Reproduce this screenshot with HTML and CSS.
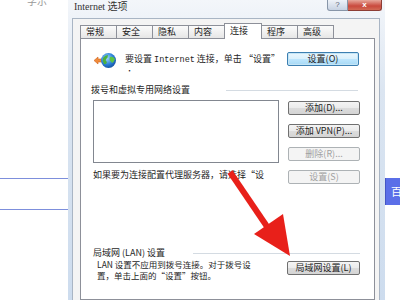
FILE: index.html
```html
<!DOCTYPE html>
<html lang="zh">
<head>
<meta charset="utf-8">
<link rel="stylesheet" href="styles.css">
</head>
<body>
<div class="screen">
  <div class="bg-left">
    <div class="bg-text">字示</div>
    <div class="bg-line l1"></div>
    <div class="bg-line l2"></div>
  </div>
  <div class="dialog">
    <div class="titlebar">
      <span class="title">Internet 选项</span>
      <div class="caption">
        <span class="cap-help">?</span>
        <span class="cap-close">x</span>
      </div>
    </div>
    <div class="client">
      <div class="tabs">
        <span class="tab">常规</span>
        <span class="tab">安全</span>
        <span class="tab">隐私</span>
        <span class="tab">内容</span>
        <span class="tab active">连接</span>
        <span class="tab">程序</span>
        <span class="tab">高级</span>
      </div>
      <div class="page">
        <div class="intro">
          <svg class="globe" width="24" height="17" viewBox="0 0 24 17">
            <defs>
              <radialGradient id="g" cx="0.4" cy="0.35" r="0.7">
                <stop offset="0" stop-color="#9fd6ff"/>
                <stop offset="0.6" stop-color="#2a7fd6"/>
                <stop offset="1" stop-color="#154f9e"/>
              </radialGradient>
            </defs>
            <path d="M1 8.5 L5 5 L5 7 L10 7 L10 10 L5 10 L5 12 Z" fill="#f08a3a" stroke="#d0641c" stroke-width="0.6"/>
            <circle cx="15.5" cy="8.5" r="7.5" fill="url(#g)"/>
            <path d="M10 6 Q12 3 15 3 Q15 6 13 7 Q12 9 14 10 Q13 13 11 12 Q9 9 10 6 Z" fill="#4cb23c"/>
            <path d="M17 5 Q20 4 22 7 Q21 10 19 11 Q18 9 17 9 Q16 7 17 5 Z" fill="#5cc444"/>
          </svg>
          <div class="intro-text">要设置 <span class="latin">Internet</span> 连接，单击 “设置”<br><span class="dot">•</span></div>
          <span class="btn default setup-btn">设置(O)</span>
        </div>
        <div class="group-head">
          <span>拨号和虚拟专用网络设置</span>
          <span class="rule rule1"></span>
        </div>
        <div class="vpn">
          <div class="vpn-left">
            <div class="listbox"></div>
            <div class="proxy-text">如果要为连接配置代理服务器，请选择“设</div>
          </div>
          <div class="vpn-right">
            <span class="btn">添加(D)...</span>
            <span class="btn">添加 VPN(P)...</span>
            <span class="btn disabled">删除(R)...</span>
            <span class="btn disabled">设置(S)</span>
          </div>
        </div>
        <div class="group-head lan-head">
          <span>局域网 (LAN) 设置</span>
          <span class="rule rule2"></span>
        </div>
        <div class="lan">
          <div class="lan-text">LAN 设置不应用到拨号连接。对于拨号设<br>置，单击上面的“设置”按钮。</div>
          <span class="btn lan-btn">局域网设置(L)</span>
        </div>
      </div>
    </div>
  </div>
  <div class="bg-right">
    <div class="blue-btn">百</div>
  </div>
  <svg class="arrow" width="400" height="300" viewBox="0 0 400 300">
    <line x1="230" y1="172" x2="268" y2="228" stroke="#e8201a" stroke-width="6"/>
    <polygon points="254,234 283,214 290,256" fill="#e8201a"/>
  </svg>
</div>
</body>
</html>
```
FILE: styles.css
```css
* { box-sizing: border-box; margin: 0; padding: 0; }
html, body { width: 400px; height: 300px; overflow: hidden; background: #fff; }
body {
  font-family: "Noto Sans CJK SC", "Liberation Sans", sans-serif;
  font-size: 9px;
  color: #1e1e1e;
}
.screen { position: relative; display: flex; height: 300px; }

/* background page */
.bg-left { width: 68px; flex: none; }
.bg-text { margin: -4px 0 0 27px; height: 7px; font-size: 10px; line-height: 10px; color: #999; }
.bg-line { height: 1px; background: #7d8fdc; }
.l1 { margin-top: 175px; }
.l2 { margin-top: 30px; }
.bg-right { flex: 1; }
.blue-btn {
  margin-top: 178px; height: 27px;
  background: #5b6fe8; color: #fff;
  font-size: 11px; line-height: 27px; padding-left: 5px;
  border-left: 1px solid #4556c4;
}

/* dialog */
.dialog {
  width: 317px; flex: none;
  display: flex; flex-direction: column;
  background: linear-gradient(#f3f6fa, #dbe5f1 30%, #cddcee);
  padding: 0 5px 0 4px;
}
.titlebar { height: 18px; display: flex; }
.title { margin: 2px 0 0 2px; font-family: "Liberation Serif", "Noto Sans CJK SC", serif; font-size: 10px; line-height: 10px; color: #333; }
.caption { margin-left: auto; margin-right: -2px; display: flex; height: 11px; }
.cap-help {
  width: 21px; height: 11px;
  border: 1px solid #8795a8; border-top: none; border-radius: 0 0 0 3px;
  background: linear-gradient(#eef2f8, #c7d2e2);
  color: #5a6576; font-family: "Liberation Sans", sans-serif; font-size: 8px; line-height: 9px; text-align: center;
}
.cap-close {
  width: 34px; height: 11px;
  border: 1px solid #8c3d35; border-left: none; border-top: none; border-radius: 0 0 3px 0;
  background: linear-gradient(#e7a89c, #c9493d 60%, #d26a55);
  color: #fff; font-family: "Liberation Sans", sans-serif; font-weight: bold; font-size: 8px; line-height: 9px; text-align: center;
}
.client {
  flex: 1;
  display: flex; flex-direction: column;
  background: #f4f4f4;
  border: 1px solid #a9b5c4; border-bottom: none;
  padding: 6px 4px 0 7px;
}
.tabs { display: flex; align-items: flex-end; height: 13px; position: relative; z-index: 1; }
.tab {
  width: 37px; height: 13px; margin-right: -1px;
  border: 1px solid #8d9099; border-bottom: none;
  background: linear-gradient(#fbfbfb, #e6e6e6);
  padding-left: 5px; line-height: 12px; color: #222;
}
.tab.active { width: 38px; height: 16px; margin-bottom: -1px; background: #fff; padding-top: 1px; }
.page {
  flex: 1;
  background: #fff;
  border: 1px solid #8d9099;
  display: flex; flex-direction: column;
}

/* buttons */
.btn {
  display: block; width: 72px; height: 14px;
  border: 1px solid #707070; border-radius: 2px;
  background: linear-gradient(#f4f4f4, #ebebeb 50%, #dcdcdc 51%, #d4d4d4);
  text-align: center; line-height: 12px; color: #222;
  white-space: nowrap;
}
.btn.default { border-color: #3c7fb1; background: linear-gradient(#eaf6fd, #d9f0fc 50%, #bee6fd 51%, #a7d9f5); box-shadow: inset 0 0 0 1px #c4e5f6; }
.btn.disabled { border-color: #adb2b5; background: #f4f4f4; color: #a0a0a0; }

.intro { display: flex; align-items: flex-start; margin-top: 12px; padding-left: 12px; }
.globe { flex: none; margin-top: 1px; }
.intro-text { margin-left: 8px; line-height: 10px; margin-top: 3px; white-space: nowrap; }
.latin { font-family: "Liberation Mono", monospace; font-size: 8.5px; }
.dot { font-size: 7px; padding-left: 1px; }
.setup-btn { margin-left: auto; margin-right: 15px; margin-top: 1px; }

.group-head { display: flex; align-items: center; margin-top: 10px; padding-left: 10px; height: 10px; line-height: 10px; }
.rule { flex: 1; border-top: 1px solid #d4dbe2; }
.rule1 { margin-left: 36px; margin-right: 16px; }
.vpn { display: flex; margin-top: 5px; padding-left: 12px; }
.vpn-left { width: 186px; }
.listbox { height: 63px; border: 1px solid #828790; background: #fff; }
.proxy-text { margin-top: 7px; white-space: nowrap; line-height: 10px; }
.vpn-right { margin-left: 9px; padding-top: 1px; display: flex; flex-direction: column; gap: 9px; }

.lan-head { margin-top: 64px; padding-left: 12px; }
.rule2 { margin-left: 28px; margin-right: 14px; }
.lan { display: flex; align-items: flex-start; margin-top: 1px; padding-left: 16px; }
.lan-text { font-size: 8.5px; line-height: 11px; white-space: nowrap; }
.lan-btn { margin-left: auto; margin-right: 14px; width: 73px; margin-top: 2px; }

.arrow { position: absolute; left: 0; top: 0; pointer-events: none; }
```
